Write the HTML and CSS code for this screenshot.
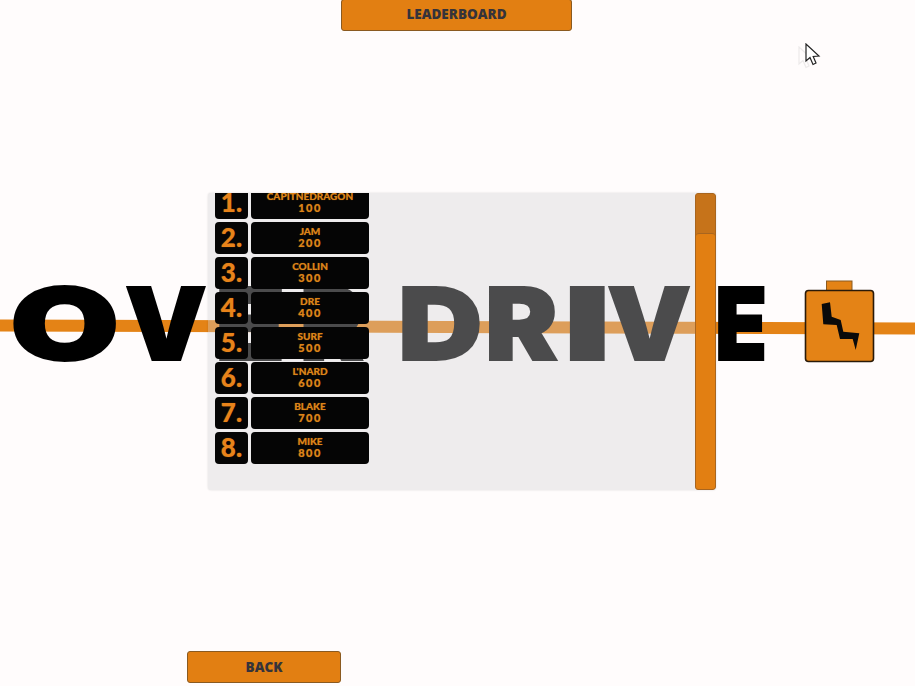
FILE: index.html
```html
<!DOCTYPE html>
<html lang="en">
<head>
    <meta charset="UTF-8">
    <meta name="viewport" content="width=device-width, initial-scale=1.0">
    <title>Leaderboard</title>
    <link rel="stylesheet" href="styles.css">
</head>
<body>

<div class="screen">
    <div class="top-row">
        <button class="game-btn leaderboard-btn" type="button">LEADERBOARD</button>
    </div>

    <div class="logo-band">
        <div class="orange-line"></div>
        <div class="logo">
            <span class="l-o">O</span><span class="l-v">V</span><span class="l-e">E</span><span class="l-r">R</span><span class="l-d">D</span><span class="l-r2">R</span><span class="l-i">I</span><span class="l-v2">V</span><span class="l-e2">E</span>
        </div>
        <svg class="battery" width="71" height="84" viewBox="0 0 71 84">
            <rect x="22.5" y="1" width="25.5" height="10" fill="#e48316" stroke="#8a5a20"/>
            <rect x="1.5" y="10.5" width="68" height="71" rx="3" fill="#e48316" stroke="#2a1a08" stroke-width="1.6"/>
            <path d="M17.7 24 L26 22.3 L27.7 36.7 L36.7 40 L39.3 51.7 L55.3 53.3 L51.7 70 L48.7 59 L36 59 L32.7 45 L19.3 44.3 Z" fill="#0a0a0a"/>
        </svg>
    </div>

    <div class="panel">
        <div class="list">
            <div class="row"><div class="rank">1.</div><div class="entry">CAPITNEDRAGON<span class="score">100</span></div></div>
            <div class="row"><div class="rank">2.</div><div class="entry">JAM<span class="score">200</span></div></div>
            <div class="row"><div class="rank">3.</div><div class="entry">COLLIN<span class="score">300</span></div></div>
            <div class="row"><div class="rank">4.</div><div class="entry">DRE<span class="score">400</span></div></div>
            <div class="row"><div class="rank">5.</div><div class="entry">SURF<span class="score">500</span></div></div>
            <div class="row"><div class="rank">6.</div><div class="entry">L'NARD<span class="score">600</span></div></div>
            <div class="row"><div class="rank">7.</div><div class="entry">BLAKE<span class="score">700</span></div></div>
            <div class="row"><div class="rank">8.</div><div class="entry">MIKE<span class="score">800</span></div></div>
        </div>
        <div class="scrollbar"><div class="thumb"></div></div>
    </div>

    <!-- pale trail left behind the pointer -->
    <svg class="cursor-ghost" width="18" height="24" viewBox="0 0 18 24">
        <path d="M1 1 L1 18 L5 14.5 L8 21.5 L11 20 L8.2 13.5 L14 13 Z" fill="#fff" stroke="#222" stroke-width="1.2"/>
    </svg>
    <svg class="cursor" width="18" height="24" viewBox="0 0 18 24">
        <path d="M1 1 L1 18 L5 14.5 L8 21.5 L11 20 L8.2 13.5 L14 13 Z" fill="#fff" stroke="#222" stroke-width="1.2"/>
    </svg>

    <div class="bottom-row">
        <button class="game-btn back-btn" type="button">BACK</button>
    </div>
</div>

</body>
</html>
```
FILE: styles.css
```css
* {
    box-sizing: border-box;
}

body {
    margin: 0;
    background-color: #fffcfc;
    font-family: "Lato", "Liberation Sans", sans-serif;
}

.screen {
    position: relative;
    width: 915px;
    height: 686px;
    overflow: hidden;
    display: flex;
    flex-direction: column;
    justify-content: space-between;
}

.top-row {
    display: flex;
    justify-content: center;
    margin-left: -2px;
}

.bottom-row {
    display: flex;
    padding: 0 0 3px 187px;
}

.game-btn {
    height: 32px;
    padding: 0;
    background-color: #e27f12;
    border: 1px solid #8a5a20;
    border-radius: 3px;
    color: #35333a;
    font-family: "Open Sans", "Liberation Sans", sans-serif;
    font-weight: 800;
    font-size: 13.5px;
}

.leaderboard-btn {
    width: 231px;
    height: 32px;
    margin-top: -1px;
    padding-bottom: 3px;
}

.back-btn {
    width: 154px;
}

/* logo sits behind the panel */
.logo-band {
    position: absolute;
    left: 0;
    top: 275px;
    width: 915px;
    height: 95px;
}

.orange-line {
    position: absolute;
    left: -5px;
    top: 46px;
    width: 925px;
    height: 11.5px;
    background-color: #e48316;
    transform: rotate(0.2deg);
}

.logo {
    position: absolute;
    left: 0;
    top: 1px;
    display: flex;
    height: 95px;
    color: #000;
    font-family: "Inter", "Liberation Sans", sans-serif;
    font-weight: 900;
    font-size: 100px;
    line-height: 95px;
    -webkit-text-stroke: 2px #000;
}

.logo span {
    display: block;
    position: absolute;
    top: 0;
    transform-origin: left center;
}

.l-o { left: 10px; transform: scaleX(1.41); }
.l-v { left: 125px; transform: scaleX(1.03); }
.l-e { left: 215px; transform: scaleX(1.15); }
.l-r { left: 300px; transform: scaleX(.95); }
.l-d { left: 398px; transform: scaleX(1.17); }
.l-r2 { left: 485px; transform: scaleX(1.09); }
.l-i { left: 564px; transform: scaleX(1.6); }
.l-v2 { left: 607px; transform: scaleX(1.06); }
.l-e2 { left: 715px; transform: scaleX(.85); }

.battery {
    position: absolute;
    left: 804px;
    top: 5px;
}

.panel {
    position: absolute;
    left: 208px;
    top: 193px;
    width: 508px;
    height: 297px;
    overflow: hidden;
    background-color: rgba(207, 207, 210, 0.36);
    border-radius: 3px;
    box-shadow: 0 0 2px rgba(0, 0, 0, 0.15);
}

.list {
    display: flex;
    flex-direction: column;
    gap: 3px;
    margin-top: -6px;
    padding-left: 7px;
}

.row {
    display: flex;
    gap: 3px;
    height: 32px;
}

.rank {
    width: 33px;
    background-color: #050505;
    border-radius: 4px;
    color: #e8831a;
    font-weight: 900;
    font-size: 26px;
    line-height: 31px;
    text-align: center;
}

.entry {
    width: 118px;
    background-color: #050505;
    border-radius: 4px;
    color: #dd8418;
    font-weight: 900;
    font-size: 10px;
    line-height: 12.5px;
    padding-top: 2.5px;
    text-align: center;
}

.score {
    display: block;
    font-size: 11px;
    letter-spacing: 1.5px;
}

.rank,
.entry {
    text-shadow: 0 0 1px rgba(221, 132, 24, 0.6);
}

.scrollbar {
    position: absolute;
    right: 0;
    top: 0;
    width: 21px;
    height: 297px;
    padding-top: 39px;
    background-color: #c6731a;
    border: 1px solid #a8651f;
    border-radius: 3px;
}

.thumb {
    height: 100%;
    background-color: #e27f12;
    border-top: 1px solid #a8651f;
    border-radius: 3px;
}

.cursor {
    position: absolute;
    left: 805px;
    top: 43px;
}

.cursor-ghost {
    position: absolute;
    left: 798px;
    top: 46px;
    opacity: 0.08;
}
```
